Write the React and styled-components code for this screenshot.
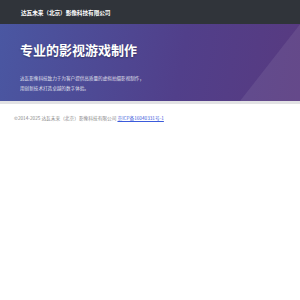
import React from 'react';
import styled, { createGlobalStyle } from 'styled-components';

const GlobalStyle = createGlobalStyle`
  html, body {
    margin: 0;
    padding: 0;
    background: #ffffff;
    font-family: "Noto Sans CJK SC", "Noto Sans", sans-serif;
  }
`;

export default function App() {
  return (
    <>
      <GlobalStyle />
      <Header>
        <Brand>达瓦未来（北京）影像科技有限公司</Brand>
      </Header>
      <Hero>
        <Slant />
        <HeroInner>
          <HeroTitle>专业的影视游戏制作</HeroTitle>
          <HeroText>
            达瓦影像科技致力于为客户提供高质量的虚拟拍摄影视制作，
            <br />
            用创新技术打造卓越的数字体验。
          </HeroText>
        </HeroInner>
      </Hero>
      <Footer>
        <FooterText>
          ©2014-2025 达瓦未来（北京）影像科技有限公司{' '}
          <FooterLink href="#">京ICP备16040331号-1</FooterLink>
        </FooterText>
      </Footer>
    </>
  );
}

const Header = styled.header`
  height: 24px;
  background-color: #30343a;
  display: flex;
  align-items: center;
  padding-left: 21px;
`;

const Brand = styled.div`
  color: #ffffff;
  font-size: 5.7px;
  font-weight: 700;
  letter-spacing: -0.1px;
`;

const Hero = styled.section`
  position: relative;
  overflow: hidden;
  height: 77px;
  background: linear-gradient(100deg, #4a57a2 0%, #513f8a 60%, #583a80 100%);
  border-bottom: 3px solid #e2e2e4;
`;

const Slant = styled.div`
  position: absolute;
  top: 0;
  left: 240px;
  width: 200px;
  height: 100%;
  background: rgba(255, 255, 255, 0.08);
  transform: skewX(-38deg);
  transform-origin: bottom left;
`;

const HeroInner = styled.div`
  position: relative;
  padding: 16px 0 0 20px;
`;

const HeroTitle = styled.h1`
  margin: 0;
  color: #ffffff;
  font-size: 13px;
  line-height: 20px;
  font-weight: 700;
  text-shadow: 0 1px 2px rgba(0, 0, 0, 0.35);
`;

const HeroText = styled.p`
  margin: 13px 0 0;
  color: rgba(255, 255, 255, 0.85);
  font-size: 4.6px;
  line-height: 10px;
`;

const Footer = styled.footer`
  padding: 10px 0 0 14px;
`;

const FooterText = styled.div`
  color: #888888;
  font-size: 4.7px;
  line-height: 8px;
`;

const FooterLink = styled.a`
  color: #3b5bdb;
  text-decoration: underline;
`;
